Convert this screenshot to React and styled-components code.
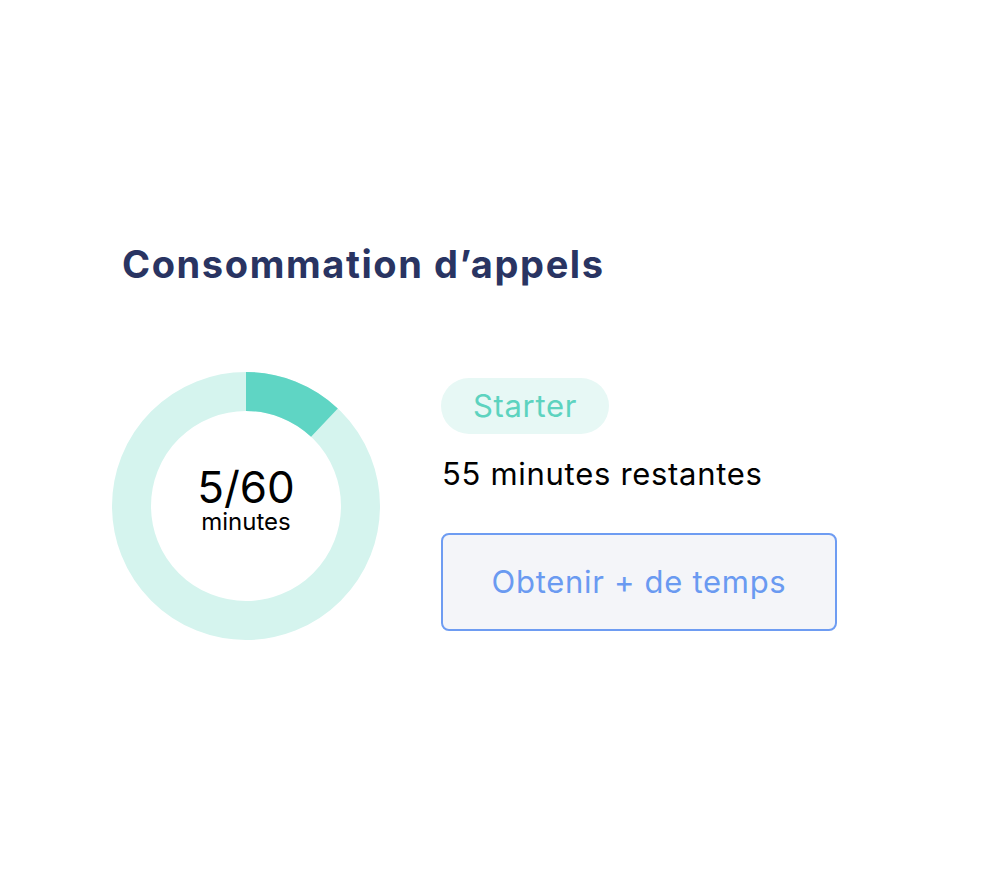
import React from "react";
import styled, { createGlobalStyle } from "styled-components";

const GlobalStyle = createGlobalStyle`
    body {
        margin: 0;
        background: #ffffff;
        font-family: Inter, "Liberation Sans", sans-serif;
    }
`;

const Page = styled.div`
    width: 1000px;
    height: 894px;
    padding: 238px 0 0 112px;
    box-sizing: border-box;
`;

const Title = styled.h1`
    margin: 0 0 0 10px;
    font-family: Inter, "Liberation Sans", sans-serif;
    font-weight: 700;
    font-size: 38px;
    line-height: 52px;
    color: #293462;
    letter-spacing: 1.6px;
`;

const Usage = styled.div`
    display: flex;
    align-items: center;
    gap: 61px;
    margin-top: 82px;
`;

const Donut = styled.div`
    position: relative;
    width: 268px;
    height: 268px;
    flex: none;
`;

const DonutLabel = styled.div`
    position: absolute;
    inset: 0;
    display: flex;
    flex-direction: column;
    align-items: center;
    justify-content: center;
    color: #000;
    padding-bottom: 11px;
`;

const Count = styled.span`
    font-size: 44px;
    line-height: 40px;
`;

const Unit = styled.span`
    margin-top: 3px;
    font-size: 24px;
    line-height: 24px;
`;

const Details = styled.div`
    display: flex;
    flex-direction: column;
    align-items: flex-start;
    margin-bottom: 4px;
    letter-spacing: 0.7px;
`;

const Plan = styled.span`
    display: inline-flex;
    align-items: center;
    justify-content: center;
    width: 168px;
    height: 56px;
    border-radius: 28px;
    background: #e7f8f5;
    color: #5dd3bf;
    font-size: 31px;
`;

const Remaining = styled.p`
    margin: 21px 0 0 1px;
    font-size: 31px;
    line-height: 38px;
    color: #000;
`;

const MoreButton = styled.button`
    margin-top: 40px;
    width: 396px;
    height: 98px;
    border: 2px solid #6e9cf2;
    border-radius: 8px;
    background: #f4f5f9;
    color: #6a9af1;
    font-family: Inter, "Liberation Sans", sans-serif;
    font-size: 31px;
    letter-spacing: 0.7px;
    cursor: pointer;
`;

const USED = 5;
const TOTAL = 60;
const SHARE = 0.12;

const UsageRing = () => {
    const r = 114.5;
    const circ = 2 * Math.PI * r;
    return (
        <Donut>
            <svg width="268" height="268" viewBox="0 0 268 268">
                <circle cx="134" cy="134" r={r} fill="none" stroke="#d5f4ee" strokeWidth="39" />
                <circle
                    cx="134"
                    cy="134"
                    r={r}
                    fill="none"
                    stroke="#5fd5c4"
                    strokeWidth="39"
                    strokeDasharray={`${circ * SHARE} ${circ}`}
                    transform="rotate(-90 134 134)"
                />
            </svg>
            <DonutLabel>
                <Count>{USED}/{TOTAL}</Count>
                <Unit>minutes</Unit>
            </DonutLabel>
        </Donut>
    );
};

const App = () => (
    <>
        <GlobalStyle />
        <Page>
            <Title>Consommation d’appels</Title>
            <Usage>
                <UsageRing />
                <Details>
                    <Plan>Starter</Plan>
                    <Remaining>{TOTAL - USED} minutes restantes</Remaining>
                    <MoreButton>Obtenir + de temps</MoreButton>
                </Details>
            </Usage>
        </Page>
    </>
);

export default App;
